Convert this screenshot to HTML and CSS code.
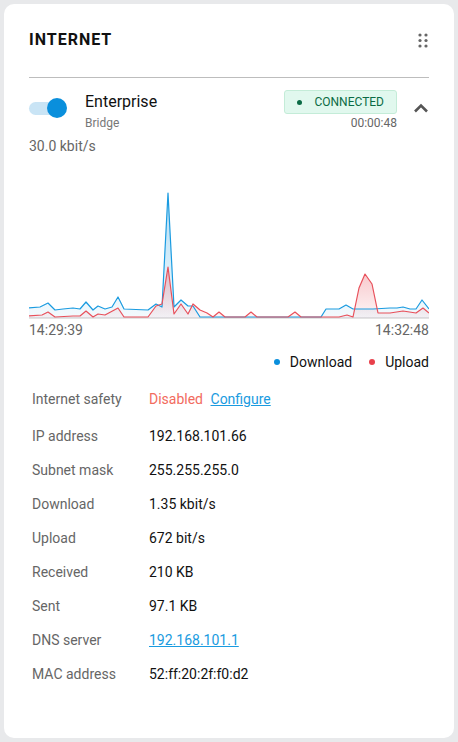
FILE: index.html
```html
<!DOCTYPE html>
<html>
<head>
<meta charset="utf-8">
<link rel="stylesheet" href="styles.css">
</head>
<body>
<div class="card">
  <div class="header">
    <h1 class="title">INTERNET</h1>
    <svg class="drag" width="10" height="15" viewBox="0 0 10 15">
      <circle cx="2" cy="2" r="1.6"/><circle cx="8" cy="2" r="1.6"/>
      <circle cx="2" cy="7.5" r="1.6"/><circle cx="8" cy="7.5" r="1.6"/>
      <circle cx="2" cy="13" r="1.6"/><circle cx="8" cy="13" r="1.6"/>
    </svg>
  </div>
  <div class="divider"></div>

  <div class="conn">
    <div class="toggle"><span class="track"></span><span class="knob"></span></div>
    <div class="conn-text">
      <div class="conn-name">Enterprise</div>
      <div class="conn-type">Bridge</div>
    </div>
    <div class="conn-status">
      <div class="badge"><span class="badge-dot"></span>CONNECTED</div>
      <div class="timer">00:00:48</div>
    </div>
    <svg class="chevron" width="16" height="10" viewBox="0 0 16 10">
      <path d="M2 8.5 L8 2.5 L14 8.5" fill="none" stroke="#555" stroke-width="2.6"/>
    </svg>
  </div>

  <div class="rate">30.0 kbit/s</div>

  <svg class="chart" width="400" height="165" viewBox="29 155 400 165">
    <defs>
      <linearGradient id="gb" x1="0" y1="0" x2="0" y2="1">
        <stop offset="0" stop-color="#1a9be0" stop-opacity="0.35"/>
        <stop offset="1" stop-color="#1a9be0" stop-opacity="0.05"/>
      </linearGradient>
      <linearGradient id="gr" x1="0" y1="0" x2="0" y2="1">
        <stop offset="0" stop-color="#e8505b" stop-opacity="0.35"/>
        <stop offset="1" stop-color="#e8505b" stop-opacity="0.05"/>
      </linearGradient>
    </defs>
    <line x1="29" y1="317" x2="429" y2="317" stroke="#c8c8c8" stroke-width="1"/>
    <polygon fill="url(#gb)" points="28,317 28,307 40,306 48,302 55,309 63,308 73,307 80,308 86,301 93,309 98,305 105,308 112,306 118,296 124,308 148,309 156,303 162,306 168,192 174,306 181,299 188,305 193,305 200,316 321,316 326,308 339,308 346,304 353,308 373,308 390,307 397,307 403,306 410,308 416,308 422,299 429,308 429,317"/>
    <polygon fill="url(#gr)" points="28,317 28,315 42,314 48,311 55,316 73,315 80,315 86,310 93,316 98,313 105,314 118,307 124,316 148,316 156,305 162,303 168,266 174,313 181,303 188,313 193,303 200,309 207,312 213,316 219,311 225,316 245,316 251,311 257,316 288,316 295,311 301,316 339,316 347,314 353,316 359,287 365,273 372,283 378,312 390,312 403,310 416,312 423,307 429,312 429,317"/>
    <polyline fill="none" stroke="#1a9be0" stroke-width="1.2" stroke-linejoin="round" points="28,307 40,306 48,302 55,309 63,308 73,307 80,308 86,301 93,309 98,305 105,308 112,306 118,296 124,308 148,309 156,303 162,306 168,192 174,306 181,299 188,305 193,305 200,316 321,316 326,308 339,308 346,304 353,308 373,308 390,307 397,307 403,306 410,308 416,308 422,299 429,308"/>
    <polyline fill="none" stroke="#e8505b" stroke-width="1.2" stroke-linejoin="round" points="28,315 42,314 48,311 55,316 73,315 80,315 86,310 93,316 98,313 105,314 118,307 124,316 148,316 156,305 162,303 168,266 174,313 181,303 188,313 193,303 200,309 207,312 213,316 219,311 225,316 245,316 251,311 257,316 288,316 295,311 301,316 339,316 347,314 353,316 359,287 365,273 372,283 378,312 390,312 403,310 416,312 423,307 429,312"/>
  </svg>
  <div class="axis"><span>14:29:39</span><span>14:32:48</span></div>

  <div class="legend">
    <span class="leg"><span class="ldot blue"></span>Download</span>
    <span class="leg"><span class="ldot red"></span>Upload</span>
  </div>

  <div class="details">
    <div class="row first"><span class="label">Internet safety</span><span class="value"><span class="disabled">Disabled</span> <a class="link" href="#">Configure</a></span></div>
    <div class="row"><span class="label">IP address</span><span class="value">192.168.101.66</span></div>
    <div class="row"><span class="label">Subnet mask</span><span class="value">255.255.255.0</span></div>
    <div class="row"><span class="label">Download</span><span class="value">1.35 kbit/s</span></div>
    <div class="row"><span class="label">Upload</span><span class="value">672 bit/s</span></div>
    <div class="row"><span class="label">Received</span><span class="value">210 KB</span></div>
    <div class="row"><span class="label">Sent</span><span class="value">97.1 KB</span></div>
    <div class="row"><span class="label">DNS server</span><span class="value"><a class="link" href="#">192.168.101.1</a></span></div>
    <div class="row"><span class="label">MAC address</span><span class="value">52:ff:20:2f:f0:d2</span></div>
  </div>
</div>
</body>
</html>
```
FILE: styles.css
```css
html, body {
  margin: 0;
  padding: 0;
  background: #e8e9eb;
  font-family: Roboto, "Liberation Sans", sans-serif;
}
.card {
  margin: 4px;
  width: 450px;
  height: 734px;
  box-sizing: border-box;
  background: #fff;
  border-radius: 10px;
  padding: 0 25px;
}
.header {
  display: flex;
  align-items: center;
  justify-content: space-between;
  padding-top: 24px;
  height: 24px;
}
.title {
  margin: 0;
  font-size: 16px;
  font-weight: 700;
  letter-spacing: 1px;
  color: #111;
  line-height: 24px;
}
.drag { fill: #666; margin-right: 1px; }
.divider {
  margin-top: 25px;
  height: 1px;
  background: #bdbdbd;
}
.conn {
  display: flex;
  align-items: flex-start;
  padding-top: 12px;
}
.toggle {
  position: relative;
  width: 39px;
  height: 20px;
  margin-top: 8px;
  flex: none;
}
.track {
  position: absolute;
  left: 0;
  top: 4px;
  width: 37px;
  height: 13px;
  border-radius: 7px;
  background: #c9e4f5;
}
.knob {
  position: absolute;
  left: 18px;
  top: 0;
  width: 20px;
  height: 20px;
  border-radius: 50%;
  background: #0a8fdc;
}
.conn-text {
  margin-left: 17px;
  padding-top: 2px;
  flex: 1;
}
.conn-name {
  font-size: 16px;
  line-height: 20px;
  color: #111;
}
.conn-type {
  margin-top: 3px;
  font-size: 12px;
  line-height: 16px;
  color: #777;
}
.conn-status {
  display: flex;
  flex-direction: column;
  align-items: flex-end;
}
.badge {
  display: flex;
  align-items: center;
  height: 22px;
  padding: 0 12px 0 12px;
  background: #e1f8ee;
  border: 1px solid #c4ecd8;
  border-radius: 3px;
  font-size: 12px;
  color: #0b6b45;
}
.badge-dot {
  width: 5px;
  height: 5px;
  border-radius: 50%;
  background: #0b6b45;
  margin-right: 12px;
}
.timer {
  margin-top: 2px;
  font-size: 12px;
  line-height: 14px;
  color: #666;
}
.chevron {
  margin-left: 16px;
  margin-top: 13px;
}
.rate {
  font-size: 14px;
  line-height: 20px;
  color: #666;
  margin-top: 5px;
}
.chart {
  display: block;
}
.axis {
  display: flex;
  justify-content: space-between;
  font-size: 14px;
  line-height: 18px;
  color: #666;
}
.legend {
  display: flex;
  justify-content: flex-end;
  gap: 17px;
  margin-top: 13px;
  font-size: 14px;
  line-height: 20px;
  color: #111;
}
.leg { display: flex; align-items: center; }
.ldot {
  width: 6px;
  height: 6px;
  border-radius: 50%;
  margin-right: 10px;
}
.ldot.blue { background: #0a8fdc; }
.ldot.red { background: #e8404b; }
.details {
  margin-top: 10px;
  padding-left: 3px;
}
.row {
  display: flex;
  align-items: center;
  height: 34px;
  font-size: 14px;
}
.row.first { height: 34px; margin-bottom: 3px; }
.label {
  width: 117px;
  color: #666;
}
.value { color: #111; }
.disabled { color: #f26b5e; margin-right: 4px; }
.link {
  color: #1a9be0;
  text-decoration: underline;
}
```
